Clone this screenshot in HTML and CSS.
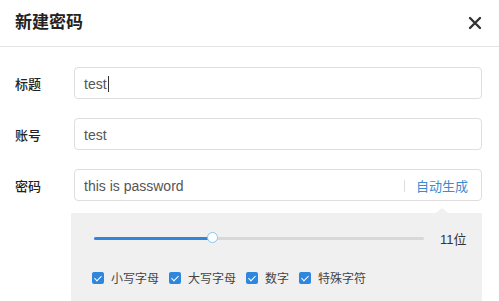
FILE: index.html
```html
<!DOCTYPE html>
<html lang="zh-CN">
  <head>
    <meta charset="UTF-8" />
    <title>新建密码</title>
    <link rel="stylesheet" href="styles.css">
  </head>
  <body>
    <div class="dialog">
      <header class="dialog-header">
        <h1>新建密码</h1>
        <button class="close-button" aria-label="关闭">
          <svg width="14" height="14" viewBox="0 0 14 14">
            <path d="M2 2 L12 12 M12 2 L2 12" stroke="#333" stroke-width="2.4" stroke-linecap="round" />
          </svg>
        </button>
      </header>

      <div class="form">
        <div class="form-row">
          <label>标题</label>
          <div class="field"><span class="value">test</span><span class="caret"></span></div>
        </div>
        <div class="form-row">
          <label>账号</label>
          <div class="field"><span class="value">test</span></div>
        </div>
        <div class="form-row">
          <label>密码</label>
          <div class="field">
            <span class="value">this is password</span>
            <span class="divider"></span>
            <a class="generate" href="#">自动生成</a>
          </div>
        </div>

        <div class="generator">
          <div class="slider-row">
            <div class="slider">
              <div class="slider-fill" style="width: 36%"></div>
              <div class="slider-thumb" style="left: 36%"></div>
            </div>
            <span class="slider-value">11位</span>
          </div>
          <div class="options">
            <label class="option"><span class="checkbox"></span>小写字母</label>
            <label class="option"><span class="checkbox"></span>大写字母</label>
            <label class="option"><span class="checkbox"></span>数字</label>
            <label class="option"><span class="checkbox"></span>特殊字符</label>
          </div>
        </div>
      </div>
    </div>
  </body>
</html>
```

FILE: styles.css
```css
body {
  margin: 0;
  font-family: "Liberation Sans", "Noto Sans CJK SC", sans-serif;
  background-color: #fff;
  color: #333;
  overflow: hidden;
}

.dialog {
  width: 499px;
  height: 301px;
  overflow: hidden;
}

.dialog-header {
  height: 47px;
  padding: 0 17px 0 15px;
  border-bottom: 1px solid #e3e3e3;
  display: flex;
  justify-content: space-between;
  align-items: center;
  box-sizing: border-box;
}

.dialog-header h1 {
  margin: 0;
  font-size: 17px;
  font-weight: 700;
  color: #222;
  position: relative;
  top: -3px;
}

.close-button {
  border: none;
  background: none;
  padding: 0;
  width: 14px;
  height: 14px;
  cursor: pointer;
  display: flex;
}

.form {
  padding: 20px 17px 0 15px;
  display: flex;
  flex-direction: column;
  gap: 19px;
}

.form-row {
  display: flex;
  align-items: center;
}

.form-row label {
  width: 59px;
  font-size: 13px;
  font-weight: 500;
  color: #222;
}

.field {
  flex-grow: 1;
  height: 32px;
  box-sizing: border-box;
  border: 1px solid #dedede;
  border-radius: 4px;
  padding: 1px 13px 0 9px;
  display: flex;
  align-items: center;
  font-size: 14px;
  color: #555;
}

.caret {
  width: 1px;
  height: 16px;
  background-color: #333;
  margin-left: 1px;
}

.divider {
  margin-left: auto;
  width: 1px;
  height: 12px;
  background-color: #ddd;
  margin-right: 11px;
}

.generate {
  font-size: 13px;
  color: #3a8bd0;
  text-decoration: none;
}

.generator {
  margin: -7px 0 0 56px;
  height: 100px;
  background-color: #f0f0f0;
  position: relative;
  padding: 18px 17px 0 23px;
  box-sizing: border-box;
}

.generator::before {
  content: "";
  position: absolute;
  top: -5px;
  right: 34px;
  border-left: 6px solid transparent;
  border-right: 6px solid transparent;
  border-bottom: 5px solid #f0f0f0;
}

.slider-row {
  display: flex;
  align-items: center;
  height: 14px;
}

.slider {
  flex: 1;
  height: 3px;
  background-color: #d8d8d8;
  border-radius: 2px;
  position: relative;
}

.slider-fill {
  height: 100%;
  background-color: #2e86dd;
  border-radius: 2px;
}

.slider-thumb {
  position: absolute;
  top: 50%;
  width: 9px;
  height: 9px;
  margin: -6px 0 0 -6px;
  border: 1.5px solid #8ac4ee;
  border-radius: 50%;
  background-color: #fff;
}

.slider-value {
  width: 25px;
  margin-left: 16px;
  font-size: 13px;
  color: #333;
  white-space: nowrap;
  flex-shrink: 0;
}

.options {
  margin-top: 24px;
  margin-left: -2px;
  display: flex;
  gap: 10px;
}

.option {
  display: flex;
  align-items: center;
  gap: 7px;
  font-size: 12px;
  color: #444;
}

.checkbox {
  width: 12px;
  height: 12px;
  border-radius: 2px;
  background-color: #2e86dd;
  position: relative;
}

.checkbox::after {
  content: "";
  position: absolute;
  left: 4px;
  top: 2px;
  width: 3px;
  height: 6px;
  border: solid #fff;
  border-width: 0 1.5px 1.5px 0;
  transform: rotate(45deg);
}
```
